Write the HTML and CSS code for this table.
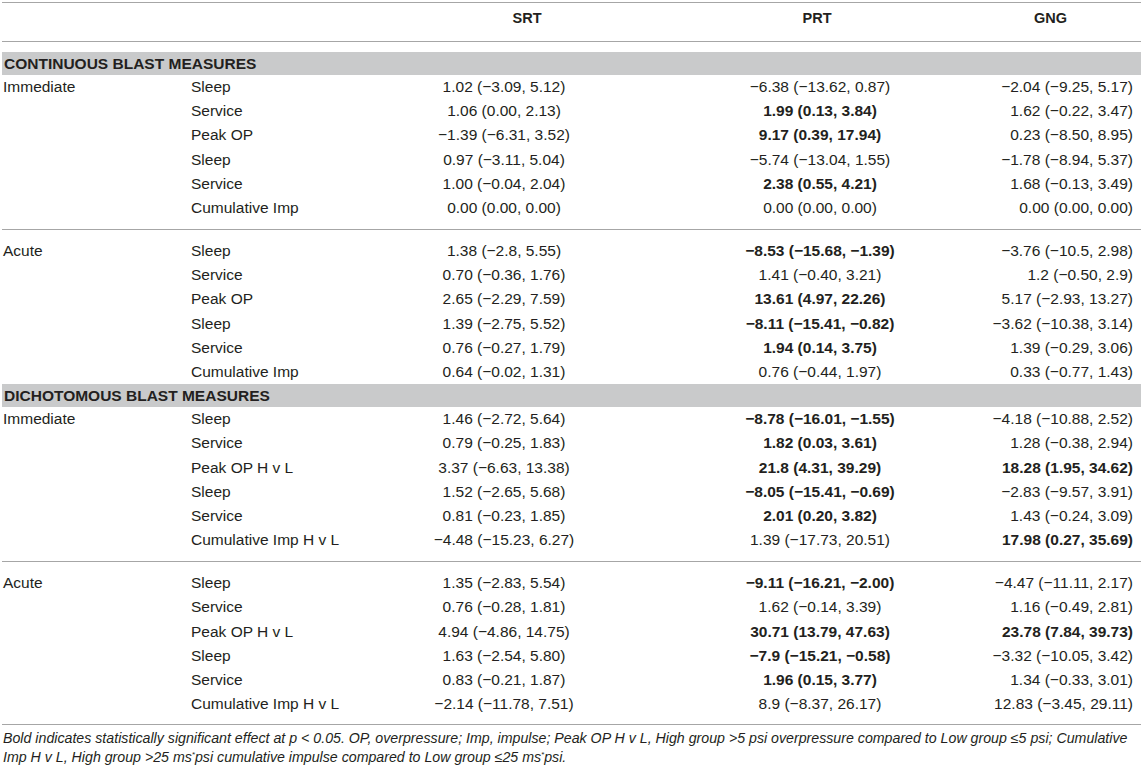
FILE: index.html
```html
<!DOCTYPE html>
<html>
<head>
<meta charset="utf-8">
<link rel="stylesheet" href="styles.css">
</head>
<body>
<div class="table">
  <div class="head">
    <div></div><div></div>
    <div class="h srt">SRT</div>
    <div class="h prt">PRT</div>
    <div class="h gng">GNG</div>
  </div>

  <div class="band">CONTINUOUS BLAST MEASURES</div>
  <div class="group first">
    <div class="label">Immediate</div>
    <div class="m">Sleep</div><div class="c">1.02 (−3.09, 5.12)</div><div class="p">−6.38 (−13.62, 0.87)</div><div class="g">−2.04 (−9.25, 5.17)</div>
    <div class="m">Service</div><div class="c">1.06 (0.00, 2.13)</div><div class="p b">1.99 (0.13, 3.84)</div><div class="g">1.62 (−0.22, 3.47)</div>
    <div class="m">Peak OP</div><div class="c">−1.39 (−6.31, 3.52)</div><div class="p b">9.17 (0.39, 17.94)</div><div class="g">0.23 (−8.50, 8.95)</div>
    <div class="m">Sleep</div><div class="c">0.97 (−3.11, 5.04)</div><div class="p">−5.74 (−13.04, 1.55)</div><div class="g">−1.78 (−8.94, 5.37)</div>
    <div class="m">Service</div><div class="c">1.00 (−0.04, 2.04)</div><div class="p b">2.38 (0.55, 4.21)</div><div class="g">1.68 (−0.13, 3.49)</div>
    <div class="m">Cumulative Imp</div><div class="c">0.00 (0.00, 0.00)</div><div class="p">0.00 (0.00, 0.00)</div><div class="g">0.00 (0.00, 0.00)</div>
  </div>
  <div class="group second">
    <div class="label">Acute</div>
    <div class="m">Sleep</div><div class="c">1.38 (−2.8, 5.55)</div><div class="p b">−8.53 (−15.68, −1.39)</div><div class="g">−3.76 (−10.5, 2.98)</div>
    <div class="m">Service</div><div class="c">0.70 (−0.36, 1.76)</div><div class="p">1.41 (−0.40, 3.21)</div><div class="g">1.2 (−0.50, 2.9)</div>
    <div class="m">Peak OP</div><div class="c">2.65 (−2.29, 7.59)</div><div class="p b">13.61 (4.97, 22.26)</div><div class="g">5.17 (−2.93, 13.27)</div>
    <div class="m">Sleep</div><div class="c">1.39 (−2.75, 5.52)</div><div class="p b">−8.11 (−15.41, −0.82)</div><div class="g">−3.62 (−10.38, 3.14)</div>
    <div class="m">Service</div><div class="c">0.76 (−0.27, 1.79)</div><div class="p b">1.94 (0.14, 3.75)</div><div class="g">1.39 (−0.29, 3.06)</div>
    <div class="m">Cumulative Imp</div><div class="c">0.64 (−0.02, 1.31)</div><div class="p">0.76 (−0.44, 1.97)</div><div class="g">0.33 (−0.77, 1.43)</div>
  </div>

  <div class="band band2">DICHOTOMOUS BLAST MEASURES</div>
  <div class="group first">
    <div class="label">Immediate</div>
    <div class="m">Sleep</div><div class="c">1.46 (−2.72, 5.64)</div><div class="p b">−8.78 (−16.01, −1.55)</div><div class="g">−4.18 (−10.88, 2.52)</div>
    <div class="m">Service</div><div class="c">0.79 (−0.25, 1.83)</div><div class="p b">1.82 (0.03, 3.61)</div><div class="g">1.28 (−0.38, 2.94)</div>
    <div class="m">Peak OP H v L</div><div class="c">3.37 (−6.63, 13.38)</div><div class="p b">21.8 (4.31, 39.29)</div><div class="g b">18.28 (1.95, 34.62)</div>
    <div class="m">Sleep</div><div class="c">1.52 (−2.65, 5.68)</div><div class="p b">−8.05 (−15.41, −0.69)</div><div class="g">−2.83 (−9.57, 3.91)</div>
    <div class="m">Service</div><div class="c">0.81 (−0.23, 1.85)</div><div class="p b">2.01 (0.20, 3.82)</div><div class="g">1.43 (−0.24, 3.09)</div>
    <div class="m">Cumulative Imp H v L</div><div class="c">−4.48 (−15.23, 6.27)</div><div class="p">1.39 (−17.73, 20.51)</div><div class="g b">17.98 (0.27, 35.69)</div>
  </div>
  <div class="group second last">
    <div class="label">Acute</div>
    <div class="m">Sleep</div><div class="c">1.35 (−2.83, 5.54)</div><div class="p b">−9.11 (−16.21, −2.00)</div><div class="g">−4.47 (−11.11, 2.17)</div>
    <div class="m">Service</div><div class="c">0.76 (−0.28, 1.81)</div><div class="p">1.62 (−0.14, 3.39)</div><div class="g">1.16 (−0.49, 2.81)</div>
    <div class="m">Peak OP H v L</div><div class="c">4.94 (−4.86, 14.75)</div><div class="p b">30.71 (13.79, 47.63)</div><div class="g b">23.78 (7.84, 39.73)</div>
    <div class="m">Sleep</div><div class="c">1.63 (−2.54, 5.80)</div><div class="p b">−7.9 (−15.21, −0.58)</div><div class="g">−3.32 (−10.05, 3.42)</div>
    <div class="m">Service</div><div class="c">0.83 (−0.21, 1.87)</div><div class="p b">1.96 (0.15, 3.77)</div><div class="g">1.34 (−0.33, 3.01)</div>
    <div class="m">Cumulative Imp H v L</div><div class="c">−2.14 (−11.78, 7.51)</div><div class="p">8.9 (−8.37, 26.17)</div><div class="g">12.83 (−3.45, 29.11)</div>
  </div>

  <p class="note">Bold indicates statistically significant effect at p &lt; 0.05. OP, overpressure; Imp, impulse; Peak OP H v L, High group &gt;5 psi overpressure compared to Low group ≤5 psi; Cumulative Imp H v L, High group &gt;25 ms<span class="star">*</span>psi cumulative impulse compared to Low group ≤25 ms<span class="star">*</span>psi.</p>
</div>
</body>
</html>
```

FILE: styles.css
```css
html, body {
  margin: 0;
  padding: 0;
  background: #ffffff;
}

body {
  font-family: "Liberation Sans", Arial, Helvetica, sans-serif;
  color: #231f20;
  font-size: 15.5px;
}

.table {
  width: 1139px;
  margin: 2px 0 0 2px;
  border-top: 1px solid #a6a6a6;
}

.head,
.group {
  display: grid;
  grid-template-columns: 189px 209px 208px 372px 161px;
  white-space: nowrap;
}

.head {
  line-height: 24px;
  padding: 3px 0 11px;
  border-bottom: 1px solid #a6a6a6;
}

.h {
  font-weight: bold;
  font-size: 14.5px;
}

.srt {
  text-align: center;
  padding-left: 46px;
}

.prt {
  text-align: center;
  padding-left: 46px;
}

.gng {
  text-align: center;
  padding-right: 20px;
}

.band {
  margin-top: 10px;
  height: 23px;
  line-height: 23px;
  background: #c9cacb;
  font-weight: bold;
  padding-left: 2px;
  font-size: 15.5px;
}

.band2 {
  margin-top: 0;
}

.group > div {
  line-height: 24.2px;
}

.group.first {
  padding-bottom: 8.8px;
  border-bottom: 1px solid #a6a6a6;
}

.group.second {
  padding-top: 9px;
}

.group.last {
  padding-bottom: 8px;
  border-bottom: 1px solid #a6a6a6;
}

.label {
  grid-row: span 6;
  padding-left: 1px;
}

.m {
  grid-column: 2;
}

.c {
  text-align: center;
}

.p {
  text-align: center;
  padding-left: 52px;
  width: 320px;
}

.g {
  text-align: right;
  padding-right: 8px;
}

.b {
  font-weight: bold;
}

.note {
  margin: 0;
  padding: 4px 0 0 1px;
  font-style: italic;
  font-size: 14.2px;
  line-height: 19px;
}

.star {
  font-size: 8px;
  vertical-align: 5px;
  line-height: 1;
}
```
